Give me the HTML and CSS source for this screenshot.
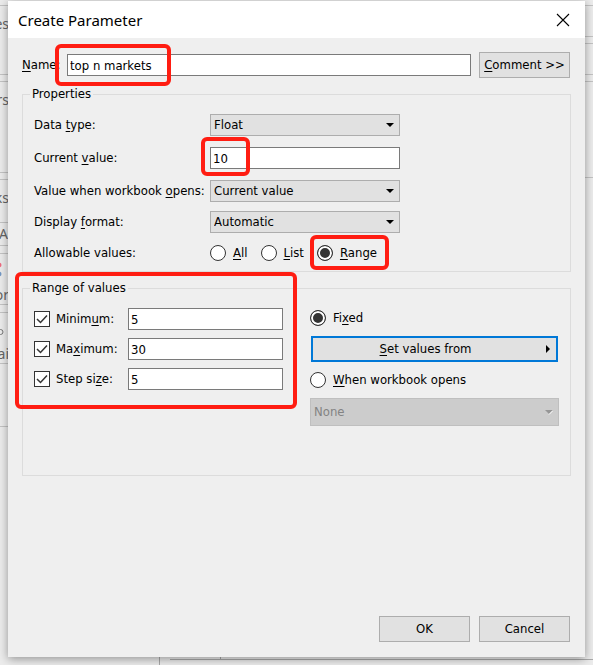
FILE: index.html
```html
<!DOCTYPE html>
<html lang="en">
<head>
<meta charset="utf-8">
<title>Create Parameter</title>
<link rel="stylesheet" href="styles.css">
</head>
<body>
<div class="backdrop" aria-hidden="true">
  <svg class="edge edge-left" width="9" height="665" stroke="#c3c3c3">
    <path d="M0 5.5H9M0 74.5H9M0 81.5H9M0 172.5H9M0 179.5H9M0 222.5H9M0 245.5H9M0 253.5H9M0 304.5H9M0 312.5H9M0 363.5H9M0 426.5H9"/>
    <circle cx="-1" cy="265" r="2.5" fill="#ee6b80" stroke="none"/>
    <circle cx="-1" cy="274" r="2.5" fill="#7498c4" stroke="none"/>
    <circle cx="0.500" cy="332" r="2.500" fill="none" stroke="#777"/>
  </svg>
  <svg class="edge edge-right" width="9" height="665" stroke="#c3c3c3">
    <path d="M0 5.500H9M0 36.500H9M0 43.500H9M0 74.500H9M0 81.500H9M0 177.500H9"/>
  </svg>
  <svg class="edge edge-bottom" width="100%" height="9" stroke="#a9a9a9">
    <path d="M159.500 0V9M220.500 0V3M170 3.500H4000"/>
  </svg>
  <span class="scrap scrap-pages">es</span>
  <span class="scrap scrap-filters">rs</span>
  <span class="scrap scrap-marks">ks</span>
  <span class="scrap scrap-auto">Au</span>
  <span class="scrap scrap-color">or</span>
  <span class="scrap scrap-detail">ai</span>
</div>

<form class="dialog">
  <header class="titlebar">
    <h1>Create Parameter</h1>
    <button type="button" class="close" aria-label="Close">
      <svg width="14" height="14" viewBox="0 0 14 14"><path d="M1 1L13 13M13 1L1 13" stroke="#000" stroke-width="1.100" fill="none"/></svg>
    </button>
  </header>

  <div class="content">
    <div class="name-row">
      <label for="name"><u>N</u>ame:</label>
      <input class="field" id="name" type="text" value="top n markets">
      <button type="button" class="btn"><span><u>C</u>omment &gt;&gt;</span></button>
      <i class="mark mark-name"></i>
    </div>

    <fieldset class="group">
      <legend>Properties</legend>
      <div class="rows">
        <div class="rows rows-values">
          <div class="row">
            <label for="type">Data <u>t</u>ype:</label>
            <div class="pick"><select id="type"><option>Float</option></select><svg width="8" height="4"><path d="M0 0H8L4 4Z"/></svg></div>
          </div>
          <div class="row">
            <label for="current">Current <u>v</u>alue:</label>
            <div class="pick"><input class="field" id="current" type="text" value="10"><i class="mark mark-current"></i></div>
          </div>
          <div class="row">
            <label for="opens">Value when workbook <u>o</u>pens:</label>
            <div class="pick"><select id="opens"><option>Current value</option></select><svg width="8" height="4"><path d="M0 0H8L4 4Z"/></svg></div>
          </div>
        </div>
        <div class="row">
          <label for="format">Display <u>f</u>ormat:</label>
          <div class="pick"><select id="format"><option>Automatic</option></select><svg width="8" height="4"><path d="M0 0H8L4 4Z"/></svg></div>
        </div>
        <div class="row">
          <span>Allowable values:</span>
          <div class="choices">
            <label class="choice"><input type="radio" name="allow"><span><u>A</u>ll</span></label>
            <label class="choice"><input type="radio" name="allow"><span><u>L</u>ist</span></label>
            <label class="choice"><input type="radio" name="allow" checked><span><u>R</u>ange</span><i class="mark mark-range"></i></label>
          </div>
        </div>
      </div>
    </fieldset>

    <fieldset class="group range-group">
      <legend>Range of values</legend>
      <div class="range">
        <div class="limits">
          <div class="limit">
            <label class="check"><input type="checkbox" checked><svg width="16" height="16"><path d="M3 8L6.500 11.500L13 4.500"/></svg><span>Minim<u>u</u>m:</span></label>
            <input class="field" type="text" value="5" aria-label="Minimum">
          </div>
          <div class="limit">
            <label class="check"><input type="checkbox" checked><svg width="16" height="16"><path d="M3 8L6.500 11.500L13 4.500"/></svg><span>Ma<u>x</u>imum:</span></label>
            <input class="field" type="text" value="30" aria-label="Maximum">
          </div>
          <div class="limit">
            <label class="check"><input type="checkbox" checked><svg width="16" height="16"><path d="M3 8L6.500 11.500L13 4.500"/></svg><span>Step si<u>z</u>e:</span></label>
            <input class="field" type="text" value="5" aria-label="Step size">
          </div>
          <i class="mark mark-limits"></i>
        </div>
        <div class="source">
          <label class="choice"><input type="radio" name="source" checked><span>Fi<u>x</u>ed</span></label>
          <button type="button" class="btn btn-focus"><span><u>S</u>et values from</span><svg width="4" height="8"><path d="M0 0V8L4 4Z"/></svg></button>
          <label class="choice"><input type="radio" name="source"><span><u>W</u>hen workbook opens</span></label>
          <div class="pick pick-off"><select disabled aria-label="Field"><option>None</option></select><svg width="8" height="5"><path d="M0 0H8L4 4Z" fill="#969696"/><path d="M4 4.500L8 0.500" stroke="#fff" fill="none"/></svg></div>
        </div>
      </div>
    </fieldset>

    <footer class="actions">
      <button type="submit" class="btn">OK</button>
      <button type="button" class="btn">Cancel</button>
    </footer>
  </div>
</form>
</body>
</html>
```
FILE: styles.css
```css
* { box-sizing: border-box; }

body {
  margin: 0;
  min-height: 100vh;
  padding: 1px 8px 8px;
  display: flex;
  position: relative;
  overflow: hidden;
  background: #ececec;
  color: #000;
  font: 13px/16px "DejaVu Sans Condensed", "DejaVu Sans", sans-serif;
}

input, select, button { font: inherit; color: inherit; margin: 0; }
u { text-underline-offset: 2px; text-decoration-thickness: 1px; text-decoration-skip-ink: none; }
svg { display: block; }

/* Application window visible round the dialog */
.backdrop { position: absolute; inset: 0; overflow: hidden; color: #666; }
.edge { position: absolute; top: 0; }
.edge-left { left: 0; }
.edge-right { right: 0; }
.edge-bottom { top: auto; bottom: 0; left: 0; }
.scrap { position: absolute; right: calc(100% - 9px); font: 14px/18px "Noto Sans", sans-serif; }
.scrap-pages { top: 15px; }
.scrap-filters { top: 91px; }
.scrap-marks { top: 189px; }
.scrap-auto { top: 225px; right: auto; left: -1px; }
.scrap-color { top: 286px; }
.scrap-detail { top: 345px; }

.dialog {
  position: relative;
  flex: 1;
  display: flex;
  flex-direction: column;
  background: #efefef;
  box-shadow: 0 2px 9px rgba(0, 0, 0, 0.38);
}

.titlebar {
  display: flex;
  align-items: center;
  justify-content: space-between;
  height: 37px;
  padding: 0 15px 0 10px;
  background: #fff;
}
.titlebar h1 { margin: 0; font: 400 15px/22px "Noto Sans", sans-serif; }
.close { border: 0; padding: 0; background: none; }

.content { flex: 1; display: flex; flex-direction: column; gap: 8px; padding: 14px 14px 15px; }

.field {
  height: 22px;
  width: 100%;
  min-width: 0;
  padding: 0 2px;
  border: 1px solid #7a7a7a;
  border-radius: 0;
  background: #fff;
}

.btn {
  min-width: 91px;
  height: 26px;
  padding: 0 4px;
  border: 1px solid #adadad;
  border-radius: 0;
  background: #e1e1e1;
  white-space: nowrap;
}

.name-row { position: relative; display: flex; align-items: center; gap: 8px; padding-right: 1px; }
.name-row label { flex: 0 0 37px; min-width: 0; }

.group { margin: 0; min-width: 0; border: 1px solid #dcdcdc; padding: 12px 11px 7px; }
.group legend { margin-left: -4px; padding: 0 2px; }
.range-group { padding-bottom: 49px; }

.rows { display: flex; flex-direction: column; gap: 9px; }
.rows-values { gap: 11px; }
.row { display: grid; grid-template-columns: 176px 190px; align-items: center; min-height: 22px; white-space: nowrap; }

.pick { position: relative; }
.pick select {
  display: block;
  appearance: none;
  width: 100%;
  height: 22px;
  padding: 0 3px;
  border: 1px solid #adadad;
  border-radius: 0;
  background: #e1e1e1;
}
.pick svg { position: absolute; right: 6px; top: 9px; pointer-events: none; }
.pick-off select { height: 28px; border-color: #bfbfbf; background: #ccc; color: #838383; opacity: 1; }
.pick-off svg { top: 12px; }

.choices { display: flex; gap: 13px; }
.choice { position: relative; display: flex; align-items: center; gap: 7px; width: max-content; }
.choice input {
  appearance: none;
  width: 16px;
  height: 16px;
  border: 1px solid #333;
  border-radius: 50%;
  background: #fff;
}
.choice input:checked { background: #333; box-shadow: inset 0 0 0 2px #fff; }

.range { display: grid; grid-template-columns: 249px 1fr; column-gap: 27px; }
.limits { position: relative; display: flex; flex-direction: column; gap: 8px; }
.limit { display: grid; grid-template-columns: 94px 1fr; align-items: center; }
.check { position: relative; display: flex; align-items: center; gap: 6px; }
.check input { appearance: none; width: 16px; height: 16px; border: 1px solid #333; background: #fff; }
.check svg { position: absolute; left: 0; fill: none; stroke: #333; stroke-width: 1.5; visibility: hidden; }
.check input:checked + svg { visibility: visible; }

.source { display: flex; flex-direction: column; gap: 10px; padding-top: 2px; }
.btn-focus { position: relative; border: 2px solid #0078d7; margin: 0 1px; padding-right: 22px; }
.btn-focus svg { position: absolute; right: 6px; top: 7px; }

.actions { display: flex; justify-content: flex-end; gap: 9px; margin-top: auto; padding-right: 1px; }

/* Highlight boxes drawn over the form */
.mark { position: absolute; border: 4px solid #ff1d12; border-radius: 6px; pointer-events: none; }
.mark-name { left: 33px; top: -8px; width: 116px; height: 42px; }
.mark-current { left: -9px; top: -10px; width: 49px; height: 39px; }
.mark-range { inset: -10px -12px -9px -7px; }
.mark-limits { left: -19px; top: -36px; width: 282px; height: 137px; }
```
